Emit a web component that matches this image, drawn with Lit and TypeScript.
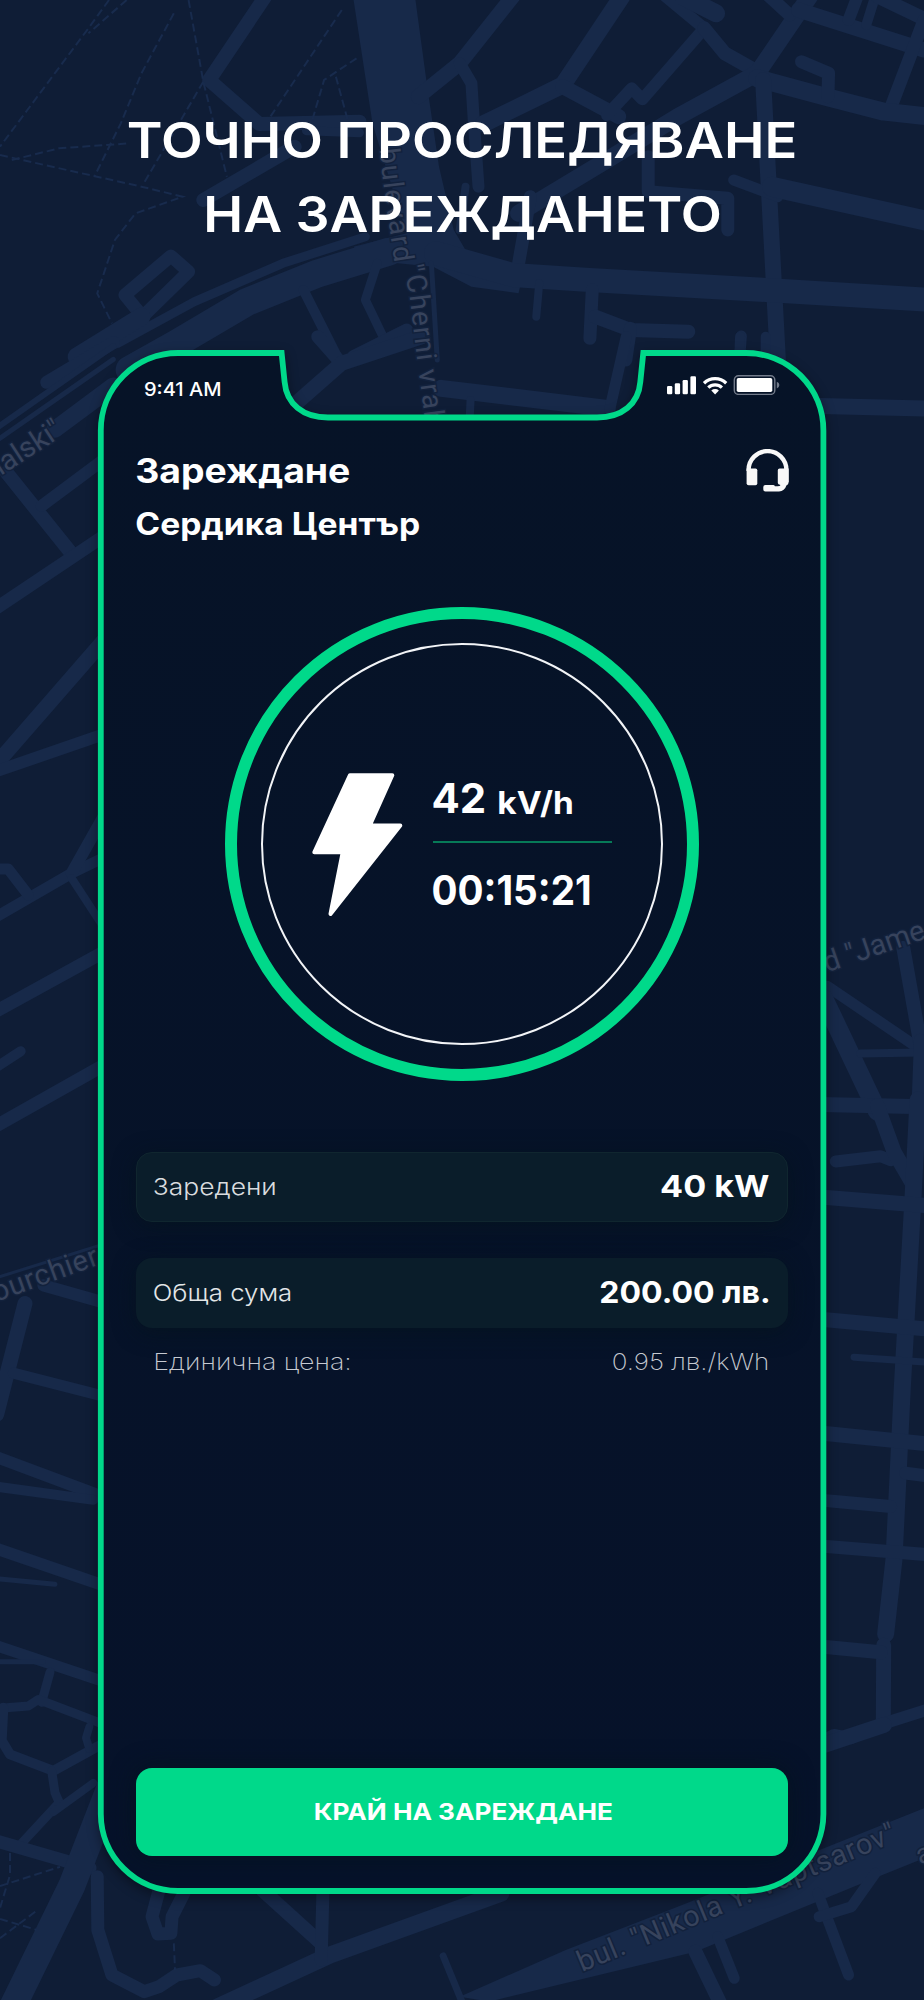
import { LitElement, html, svg, css } from "lit";
import { customElement, property } from "lit/decorators.js";

/** One line of text whose box is exactly its cap height and its drawn width. */
@customElement("fit-text")
class FitText extends LitElement {
  @property() text = "";
  @property({ type: Number }) w = 100;
  @property({ type: Number }) cap = 20;
  @property({ type: Number }) weight = 700;
  @property({ type: Number }) bearing = 0.055;
  @property() color = "#ffffff";

  static styles = css`
    :host { display: block; flex: none; }
    .line { display: block; overflow: visible; font-family: Inter, "Open Sans", sans-serif; }
  `;

  render() {
    const size = this.cap / 0.727;
    const b = size * this.bearing;
    return html`<svg class="line" width=${this.w} height=${this.cap}>
      <text x=${-b} y=${this.cap} font-size=${size} font-weight=${this.weight} fill=${this.color}
        textLength=${this.w + 2 * b} lengthAdjust="spacingAndGlyphs">${this.text}</text>
    </svg>`;
  }
}

type Road = [number, string];

interface Tile {
  transform: string;
  roads: Road[];
  paths?: string[];
  areas?: string[];
}

const TILES: Tile[] = [
  {
    transform: "scale(0.5893 0.33333)",
    areas: [
      "M600 0H705L725 260L745 500L770 690L790 750L890 800L880 880L800 860L735 800L620 780L600 740L690 700L665 560L632 370Z",
    ],
    roads: [
      [14, "M450 -10L355 240L440 372L610 365"],
      [9, "M520 392L610 398"],
      [14, "M500 440L345 600"],
      [15, "M870 -10L780 190L710 290"],
      [12, "M780 190L800 250L805 390L812 560"],
      [17, "M1055 -10L955 255L820 372"],
      [15, "M955 260L1050 350"],
      [12, "M1130 -10L1195 85L1090 298L1072 265L1030 345"],
      [18, "M1160 -10L1215 40"],
      [14, "M1195 85L1230 160L1285 215"],
      [17, "M1385 -40L1285 220L1150 350L1030 480L880 640"],
      [13, "M1300 -20L1340 45"],
      [15, "M1355 30L1568 150"],
      [12, "M1440 60L1455 -10"],
      [10, "M1485 -10L1470 75"],
      [14, "M1490 -10L1578 65"],
      [13, "M1568 60L1510 330"],
      [18, "M1285 235L1400 290L1500 335L1578 350"],
      [13, "M1360 185L1406 220L1405 290"],
      [16, "M1295 240L1320 1080"],
      [11, "M1245 540L1320 590"],
      [20, "M1310 560L1578 665"],
      [13, "M1100 470L1100 575L1235 595L1235 690"],
      [13, "M900 590L880 790"],
      [8, "M790 560L780 690"],
      [28, "M220 1110L300 1030L420 905L540 820L660 755"],
      [9, "M200 1030L330 905L480 790L620 710"],
      [24, "M740 760L870 825L1000 840L1300 870L1580 900"],
      [13, "M290 768L320 815L242 950L212 885Z"],
      [18, "M240 950L130 1070"],
      [10, "M515 870L575 1080"],
      [9, "M640 790L620 900L650 1010"],
      [13, "M690 990L600 1070"],
      [5, "M732 790L742 1080"],
      [8, "M915 850L910 950"],
      [13, "M1005 870L1001 1015"],
      [14, "M1010 950L1070 990L1168 995"],
      [13, "M1070 985L1062 1080"],
      [11, "M1258 1008L1255 1080"],
    ],
    paths: [
      "M185 0L150 85L0 440", "M215 0L150 100", "M320 0L345 245L385 530", "M345 245L242 556",
      "M295 40L240 220L205 370L160 530", "M580 30L455 360", "M605 175L550 240L530 360",
      "M570 230L590 360", "M0 465L240 560L310 590L230 640L195 720L165 880L190 970",
      "M20 480L100 445L220 430",
    ],
  },
  {
    transform: "translate(90 340) scale(0.4745 0.33333)",
    roads: [
      [13, "M480 -10L530 70"],
      [15, "M700 -10L530 70L410 220"],
      [17, "M740 145L1090 205"],
      [11, "M1130 -10L1095 210"],
      [8, "M802 180L800 240"],
      [10, "M1370 -10L1368 60"],
      [10, "M1424 -10L1424 60"],
    ],
  },
  {
    transform: "translate(0 340) scale(0.33333 0.5102)",
    roads: [
      [13, "M140 83L340 5"], [5, "M-5 195L340 38"], [6, "M-5 170L340 12"],
      [17, "M165 175L340 90"], [14, "M20 260L210 415"], [12, "M125 325L310 235"],
      [13, "M-10 525L310 385"], [15, "M-10 830L310 590"], [12, "M-10 845L310 773"],
      [11, "M-10 1130L215 1045L310 1015"], [12, "M215 1045L310 935"],
      [11, "M-5 1037L25 1037L85 1088"], [8, "M215 1055L310 1150"],
      [13, "M-10 1315L310 1200"], [10, "M-10 1425L62 1394"], [13, "M-10 1540L310 1422"],
    ],
  },
  {
    transform: "translate(0 1140) scale(0.33333 0.54855)",
    roads: [
      [3, "M-5 250L310 190"], [12, "M130 265L310 296"], [15, "M75 298L-10 500"],
      [11, "M40 425L310 467"], [12, "M-10 578L285 645"], [10, "M-10 632L280 656"],
      [12, "M-10 745L310 812"], [5, "M-5 800L165 810"], [11, "M-10 922L310 987"],
      [5, "M-5 951L130 951"], [9, "M150 970L125 1025"],
      [9, "M-5 1036L85 1032L115 1020L310 1065"], [10, "M10 1035L5 1095L30 1120L160 1150L310 1100"],
      [8, "M268 1070L258 1090L268 1110"], [9, "M155 1150L165 1190L178 1208L65 1282"],
      [8, "M160 1225L280 1172"], [13, "M-10 1278L270 1327"],
      [27, "M330 1180L215 1360L30 1590"], 
    ],
    paths: ["M30 1300L30 1340L0 1400", "M0 1360L180 1325", "M0 1420L110 1440", "M0 1455L110 1405"],
  },
  {
    transform: "translate(814 300) scale(0.33333 0.5102)",
    roads: [
      [16, "M20 208L340 213"], [11, "M40 1345L340 1478"], [19, "M30 1370L190 1590"],
      [8, "M140 1477L320 1475"], [14, "M268 1270L325 1480"], [12, "M318 1450L310 1590"],
    ],
  },
  {
    transform: "translate(814 1100) scale(0.33333 0.57405)",
    roads: [
      [15, "M20 8L340 12"], [12, "M65 107L200 98L230 105"], [15, "M190 10L240 90L295 145"],
      [17, "M312 0L297 170L265 500L240 800L215 930"], [15, "M209 950L208 1085"],
      [15, "M20 169L340 184"], [15, "M20 382L340 399"], [7, "M120 448L340 457"],
      [15, "M20 580L340 599"], [13, "M275 650L340 655"], [13, "M20 697L230 708"],
      [13, "M20 777L340 792"], [14, "M20 952L200 962"],
      [12, "M20 1118L60 1106L110 1112L200 1088L340 1062"],
    ],
  },
  {
    transform: "translate(0 1730) scale(0.5893 0.33333)",
    areas: ["M780 800L960 660L1150 530L1568 235V385L1490 440L1180 665L830 815Z"],
    roads: [
      [17, "M370 830L560 675L850 490"], [14, "M445 480L545 640"], [13, "M548 480L545 690"],
      [7, "M752 678L785 820"], [14, "M1180 665L1225 830"], [11, "M1218 620L1246 745"],
      [11, "M1388 490L1440 735"], [11, "M1390 560L1445 530L1485 430"],
      [16, "M1390 50L1500 -15"],
      [13, "M165 440L166 600L190 735L245 785L270 770L300 735L340 722L364 750"],
      [13, "M270 480L258 560L268 612L290 610L292 560L312 490"],
    ],
    paths: ["M295 640L297 720"],
  },
];

@customElement("city-map")
class CityMap extends LitElement {
  static styles = css`
    :host { display: block; }
    .map { display: block; background: #0f1d36; }
    .road { fill: none; stroke: #172949; stroke-linecap: round; stroke-linejoin: round; vector-effect: non-scaling-stroke; }
    .area { fill: #172949; }
    .path { fill: none; stroke: #182b4d; stroke-width: 2; stroke-dasharray: 8 4; vector-effect: non-scaling-stroke; }
    .name { fill: #37435c; stroke: #12213c; stroke-width: 3; paint-order: stroke; font-family: Roboto, sans-serif; }
  `;

  render() {
    return html`<svg class="map" width="924" height="2000" viewBox="0 0 924 2000">
      <defs>
        <path id="bulevard" d="M379.500 149L384 190L395 266L400 290" />
        <path id="cherni" d="M403 267L409 292L417 358L425 420L430 460" />
      </defs>
      ${TILES.map((t) => svg`<g transform=${t.transform}>
        ${(t.areas ?? []).map((d) => svg`<path class="area" d=${d} />`)}
        ${t.roads.map(([w, d]) => svg`<path class="road" stroke-width=${w} d=${d} />`)}
        ${(t.paths ?? []).map((d) => svg`<path class="path" d=${d} />`)}
      </g>`)}
      <text class="name" font-size="28"><textPath href="#bulevard" textLength="115">bulevard</textPath></text>
      <text class="name" font-size="28"><textPath href="#cherni" textLength="161">"Cherni vrah</textPath></text>
      <text class="name" font-size="29" transform="translate(-7 481) rotate(-33)">nalski"</text>
      <text class="name" font-size="29" textLength="111" transform="translate(-4 1302) rotate(-20)">ourchier</text>
      <text class="name" font-size="29" transform="translate(814 977) rotate(-19)">vd "Jame</text>
      <text class="name" font-size="29" textLength="342" transform="translate(582 1972) rotate(-22.6)">bul. "Nikola Y. Vaptsarov"</text>
      <text class="name" font-size="28" transform="translate(920 1865) rotate(-22)">a</text>
    </svg>`;
  }
}

const FRAME =
  "M178 353H281.6L284.6 382C286.5 404 303 417.5 328 417.5H597C622 417.5 638.500 404 640.3 382L643.3 353H746A77.400 77.400 0 0 1 823.400 430.400V1814A77.400 77.400 0 0 1 746 1891H178A77.400 77.400 0 0 1 100.800 1814V430.400A77.400 77.400 0 0 1 178 353Z";

@customElement("app-root")
class AppRoot extends LitElement {
  static styles = css`
    :host { display: block; width: 924px; height: 2000px; position: relative; overflow: hidden; background: #0f1d36; }
    * { box-sizing: border-box; }
    .backdrop { position: absolute; inset: 0; }
    .shell { position: absolute; inset: 0; display: block; filter: drop-shadow(0 4px 6px rgba(0, 0, 0, 0.4)); }
    .page { position: relative; display: flex; flex-direction: column; align-items: center; height: 2000px; }
    .title { display: flex; flex-direction: column; align-items: center; gap: 38.500px; padding-top: 121.600px; height: 350px; }
    .phone { display: flex; flex-direction: column; width: 728px; height: 1544px; padding: 25px 38px 38.300px 37.500px; }
    .status { display: flex; justify-content: space-between; align-items: flex-start; height: 20px; padding: 0 8.500px 0 9px; }
    .clock { padding-top: 7.400px; }
    .tray, .icon { display: block; }
    .head { display: flex; justify-content: space-between; margin-top: 54.400px; height: 133.800px; }
    .names { display: flex; flex-direction: column; gap: 30px; padding: 9.200px 0 0 1px; }
    .icon { margin-right: -0.500px; }
    .dial { align-self: center; width: 474px; height: 474px; margin-top: 24.300px; border: 12px solid #00d98a; border-radius: 50%; padding: 24px; }
    .face { display: flex; align-items: flex-start; width: 402px; height: 402px; border: 2px solid #f2f4f7; border-radius: 50%; padding: 128px 0 0 49px; }
    .bolt { display: block; flex: none; }
    .stats { display: flex; flex-direction: column; width: 179px; margin: 10.500px 0 0 30px; }
    .power { display: flex; align-items: flex-end; gap: 14.500px; }
    .rule { height: 2px; background: #067a57; margin: 28px 0 33px; }
    .cards { display: flex; flex-direction: column; gap: 36px; margin-top: 70.700px; }
    .card { display: flex; justify-content: space-between; align-items: center; height: 70px; padding: 0 19.500px 2px 18.500px; border-radius: 16px; background: #0a1d2a; box-shadow: 0 4px 22px rgba(4, 20, 28, 0.65); }
    .lined { border: 1px solid #10262f; padding: 0 18.500px 1.500px 17.500px; }
    .unit { display: flex; justify-content: space-between; padding: 25px 20px 0 19px; }
    .stop { display: flex; align-items: center; justify-content: center; width: 652.500px; height: 88px; margin-top: auto; padding: 0 0 0 2px; border: 0; border-radius: 16px; background: #00d98a; box-shadow: 0 0 24px rgba(4, 20, 28, 0.7); }
  `;

  render() {
    return html`
      <city-map class="backdrop"></city-map>
      <svg class="shell" width="924" height="2000" viewBox="0 0 924 2000">
        <defs><linearGradient id="g" x1="0" y1="0" x2="0" y2="1"><stop offset="0" stop-color="#061327" /><stop offset="1" stop-color="#06122a" /></linearGradient></defs>
        <path d=${FRAME} fill="url(#g)" stroke="#00d98a" stroke-width="5.800" stroke-linejoin="miter" />
      </svg>
      <main class="page">
        <header class="title">
          <fit-text text="ТОЧНО ПРОСЛЕДЯВАНЕ" .w=${666} .cap=${36} .weight=${600} .bearing=${0.045}></fit-text>
          <fit-text text="НА ЗАРЕЖДАНЕТО" .w=${513} .cap=${36} .weight=${600}></fit-text>
        </header>
        <section class="phone">
          <div class="status">
            <fit-text class="clock" text="9:41 AM" .w=${75.5} .cap=${13.6} .weight=${550}></fit-text>
            <svg class="tray" width="113" height="20" viewBox="667 375 113 20" fill="#fff">
              <rect x="667" y="386" width="5.300" height="8.300" rx="1.200" />
              <rect x="674.800" y="383.300" width="5.300" height="11" rx="1.200" />
              <rect x="682.600" y="380" width="5.300" height="14.300" rx="1.200" />
              <rect x="690.400" y="376.200" width="5.600" height="18.100" rx="1.200" />
              <g fill="none" stroke="#fff" stroke-width="3.300">
                <path d="M704 383.200A16 16 0 0 1 726.200 383.200" />
                <path d="M708.300 387.600A9.900 9.900 0 0 1 721.900 387.600" />
              </g>
              <path d="M711.300 390.500A5.600 5.600 0 0 1 718.900 390.500L715.100 394.400Z" />
              <rect x="734.300" y="375.700" width="40.500" height="18.700" rx="4.200" fill="none" stroke="#737b8a" stroke-width="1.400" />
              <rect x="736.700" y="378" width="35.600" height="14" rx="1.800" />
              <path d="M776.800 381.700Q779.400 382.600 779.400 385Q779.400 387.400 776.800 388.400Z" fill="#737b8a" />
            </svg>
          </div>
          <div class="head">
            <div class="names">
              <fit-text text="Зареждане" .w=${211.5} .cap=${24.4}></fit-text>
              <fit-text text="Сердика Център" .w=${281.5} .cap=${22.4}></fit-text>
            </div>
            <svg class="icon" width="43" height="44" viewBox="0 0 43 44">
              <path d="M2.600 22V21A18.800 18.800 0 0 1 40.400 21V33" fill="none" stroke="#f8f8f8" stroke-width="4.400" />
              <path d="M0.600 19.500H9.500Q11.300 19.500 11.300 21.300V34.300Q11.300 36.300 9.500 36.300H2.600Q.6 36.300.6 34.300Z" fill="#f8f8f8" />
              <path d="M42.600 19.500H33.600Q31.800 19.500 31.800 21.300V34Q31.800 35.600 34.500 36Q34.200 37.300 31.500 37.300H28.900Q28.600 36 27.200 36H19.400Q17.300 36 17.300 38V40.400Q17.300 42.400 19.400 42.400H33Q38.600 42.400 40.400 36.600Q42.600 35.600 42.600 33.600Z" fill="#f8f8f8" />
            </svg>
          </div>
          <div class="dial">
            <div class="face">
              <svg class="bolt" width="91" height="144" viewBox="0 0 91 144">
                <path d="M38 2.200H80.300L57.800 52.500H88.300L18.500 141L30.700 79.300H2.300Z" fill="#fff" stroke="#fff" stroke-width="4" stroke-linejoin="round" />
              </svg>
              <div class="stats">
                <div class="power">
                  <fit-text text="42" .w=${51.5} .cap=${29.4} .bearing=${0.04}></fit-text>
                  <fit-text text="kV/h" .w=${73} .cap=${22.8}></fit-text>
                </div>
                <div class="rule"></div>
                <fit-text text="00:15:21" .w=${157} .cap=${29.4} .bearing=${0.04}></fit-text>
              </div>
            </div>
          </div>
          <div class="cards">
            <div class="card lined">
              <fit-text text="Заредени" .w=${121.5} .cap=${17} .weight=${300} color="#d9dcdf"></fit-text>
              <fit-text text="40 kW" .w=${107.5} .cap=${22} .bearing=${0.03}></fit-text>
            </div>
            <div class="card">
              <fit-text text="Обща сума" .w=${137} .cap=${17} .weight=${300} color="#e3e6e8"></fit-text>
              <fit-text text="200.00 лв." .w=${168} .cap=${22}></fit-text>
            </div>
          </div>
          <div class="unit">
            <fit-text text="Единична цена:" .w=${195} .cap=${17} .weight=${200} .bearing=${0.075} color="#c6cad1"></fit-text>
            <fit-text text="0.95 лв./kWh" .w=${155} .cap=${17} .weight=${200} color="#c6cad1"></fit-text>
          </div>
          <button class="stop">
            <fit-text text="КРАЙ НА ЗАРЕЖДАНЕ" .w=${296.5} .cap=${17}></fit-text>
          </button>
        </section>
      </main>
    `;
  }
}
